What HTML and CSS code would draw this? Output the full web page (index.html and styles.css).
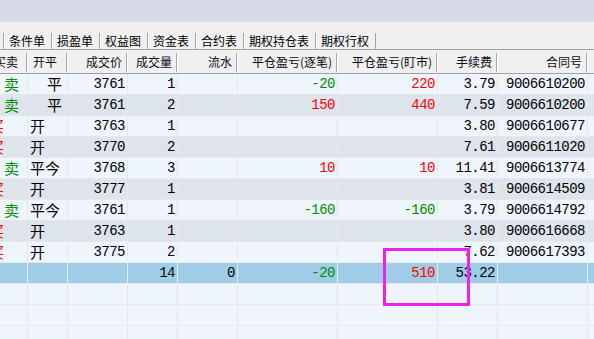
FILE: index.html
```html
<!DOCTYPE html>
<html lang="zh-CN">
<head>
<meta charset="utf-8">
<title>成交记录</title>
<link rel="stylesheet" href="styles.css">
</head>
<body>
<div class="window">
  <div class="titlebar"></div>
  <div class="tabbar">
    <span class="tab">条件单</span><span class="tab">损盈单</span><span class="tab">权益图</span><span class="tab">资金表</span><span class="tab">合约表</span><span class="tab">期权持仓表</span><span class="tab last">期权行权</span>
  </div>
  <table class="grid">
    <colgroup>
      <col class="w40"><col class="w40"><col class="w60"><col class="w50"><col class="w60"><col class="w100"><col class="w100"><col class="w60"><col class="w90"><col class="w40">
    </colgroup>
    <thead>
      <tr><th class="side">买卖</th><th class="left">开平</th><th>成交价</th><th>成交量</th><th>流水</th><th>平仓盈亏(逐笔)</th><th>平仓盈亏(盯市)</th><th>手续费</th><th>合同号</th><th></th></tr>
    </thead>
    <tbody>
      <tr class="odd"><td class="sell">卖</td><td class="oc ind">平</td><td>3761</td><td>1</td><td></td><td class="dn">-20</td><td class="up">220</td><td>3.79</td><td>9006610200</td><td></td></tr>
      <tr class="even"><td class="sell">卖</td><td class="oc ind">平</td><td>3761</td><td>2</td><td></td><td class="up">150</td><td class="up">440</td><td>7.59</td><td>9006610200</td><td></td></tr>
      <tr class="odd"><td class="buy">买</td><td class="oc">开</td><td>3763</td><td>1</td><td></td><td></td><td></td><td>3.80</td><td>9006610677</td><td></td></tr>
      <tr class="even"><td class="buy">买</td><td class="oc">开</td><td>3770</td><td>2</td><td></td><td></td><td></td><td>7.61</td><td>9006611020</td><td></td></tr>
      <tr class="odd"><td class="sell">卖</td><td class="oc">平今</td><td>3768</td><td>3</td><td></td><td class="up">10</td><td class="up">10</td><td>11.41</td><td>9006613774</td><td></td></tr>
      <tr class="even"><td class="buy">买</td><td class="oc">开</td><td>3777</td><td>1</td><td></td><td></td><td></td><td>3.81</td><td>9006614509</td><td></td></tr>
      <tr class="odd"><td class="sell">卖</td><td class="oc">平今</td><td>3761</td><td>1</td><td></td><td class="dn">-160</td><td class="dn">-160</td><td>3.79</td><td>9006614792</td><td></td></tr>
      <tr class="even"><td class="buy">买</td><td class="oc">开</td><td>3763</td><td>1</td><td></td><td></td><td></td><td>3.80</td><td>9006616668</td><td></td></tr>
      <tr class="odd"><td class="buy">买</td><td class="oc">开</td><td>3775</td><td>2</td><td></td><td></td><td></td><td>7.62</td><td>9006617393</td><td></td></tr>
      <tr class="total"><td></td><td></td><td></td><td>14</td><td>0</td><td class="dn">-20</td><td class="up">510</td><td>53.22</td><td></td><td></td></tr>
      <tr class="odd"><td></td><td></td><td></td><td></td><td></td><td></td><td></td><td></td><td></td><td></td></tr>
      <tr class="odd"><td></td><td></td><td></td><td></td><td></td><td></td><td></td><td></td><td></td><td></td></tr>
      <tr class="odd"><td></td><td></td><td></td><td></td><td></td><td></td><td></td><td></td><td></td><td></td></tr>
    </tbody>
  </table>
  <div class="highlight"></div>
</div>
</body>
</html>
```

FILE: styles.css
```css
html, body {
  margin: 0;
  padding: 0;
}
body {
  width: 594px;
  height: 339px;
  overflow: hidden;
  background: #eff5fc;
  font-family: "Noto Sans CJK SC", "Noto Sans", sans-serif;
}
.window {
  position: relative;
  width: 594px;
  height: 339px;
  overflow: hidden;
}
.titlebar {
  height: 22px;
  background: #d6d9e8;
}
.tabbar {
  display: flex;
  padding: 11px 0 0 3px;
  height: 16px;
  background: #f0f0f0;
  border-bottom: 1px solid #a0a0a0;
}
.tab {
  display: block;
  height: 16px;
  line-height: 16px;
  font-size: 12px;
  color: #000;
  padding: 0 6px 0 5px;
  border-left: 1px solid #a4a4a4;
  box-shadow: inset 1px 0 0 #ffffff;
  white-space: nowrap;
}
.tab.last {
  border-right: 1px solid #a4a4a4;
}
.grid {
  table-layout: fixed;
  width: 640px;
  margin-left: -12px;
  border-collapse: separate;
  border-spacing: 0;
}
.w40 { width: 40px; }
.w50 { width: 50px; }
.w60 { width: 60px; }
.w90 { width: 90px; }
.w100 { width: 100px; }
.grid th {
  height: 23px;
  padding: 0 6px 0 0;
  font-size: 12px;
  font-weight: normal;
  color: #0a0a14;
  text-align: right;
  white-space: nowrap;
  overflow: hidden;
  line-height: 23px;
  border-bottom: 1px solid #a0a0a0;
  background:
    linear-gradient(#a6a6a6, #a6a6a6) right 1px top 3px / 1px 19px no-repeat,
    linear-gradient(#ffffff, #ffffff) right 0 top 3px / 1px 19px no-repeat,
    #f0f0f0;
}
.grid th.side {
  padding-right: 10px;
}
.grid th.left {
  text-align: left;
  padding-left: 5px;
}
.grid td {
  height: 20px;
  line-height: 20px;
  padding: 0 2px 0 2px;
  text-align: right;
  white-space: nowrap;
  overflow: hidden;
  font-family: "Liberation Mono", "DejaVu Sans Mono", monospace;
  font-size: 14px;
  letter-spacing: -0.5px;
  color: #000;
  border-right: 1px solid #e6e6e6;
  border-bottom: 1px solid #e6e8ea;
}
.grid tr.odd td { background: #eff5fc; }
.grid tr.even td { background: #dee4eb; }
.grid tr.total td { background: #9fcce6; border-right-color: #e8eef2; }
.grid td.sell,
.grid td.buy,
.grid td.oc {
  font-family: "Noto Sans CJK SC", sans-serif;
  font-size: 15px;
  letter-spacing: 0;
}
.grid td.sell {
  color: #008c00;
  padding-right: 8px;
}
.grid td.buy {
  color: #ff0000;
  text-align: left;
  padding-left: 1px;
}
.grid td.oc {
  text-align: left;
  padding-left: 2px;
}
.grid td.oc.ind {
  padding-left: 19px;
}
.grid td.up { color: #ff0000; }
.grid td.dn { color: #008c00; }
.highlight {
  position: absolute;
  left: 383px;
  top: 248px;
  width: 81px;
  height: 52px;
  border: 3px solid #f020f0;
}
```
